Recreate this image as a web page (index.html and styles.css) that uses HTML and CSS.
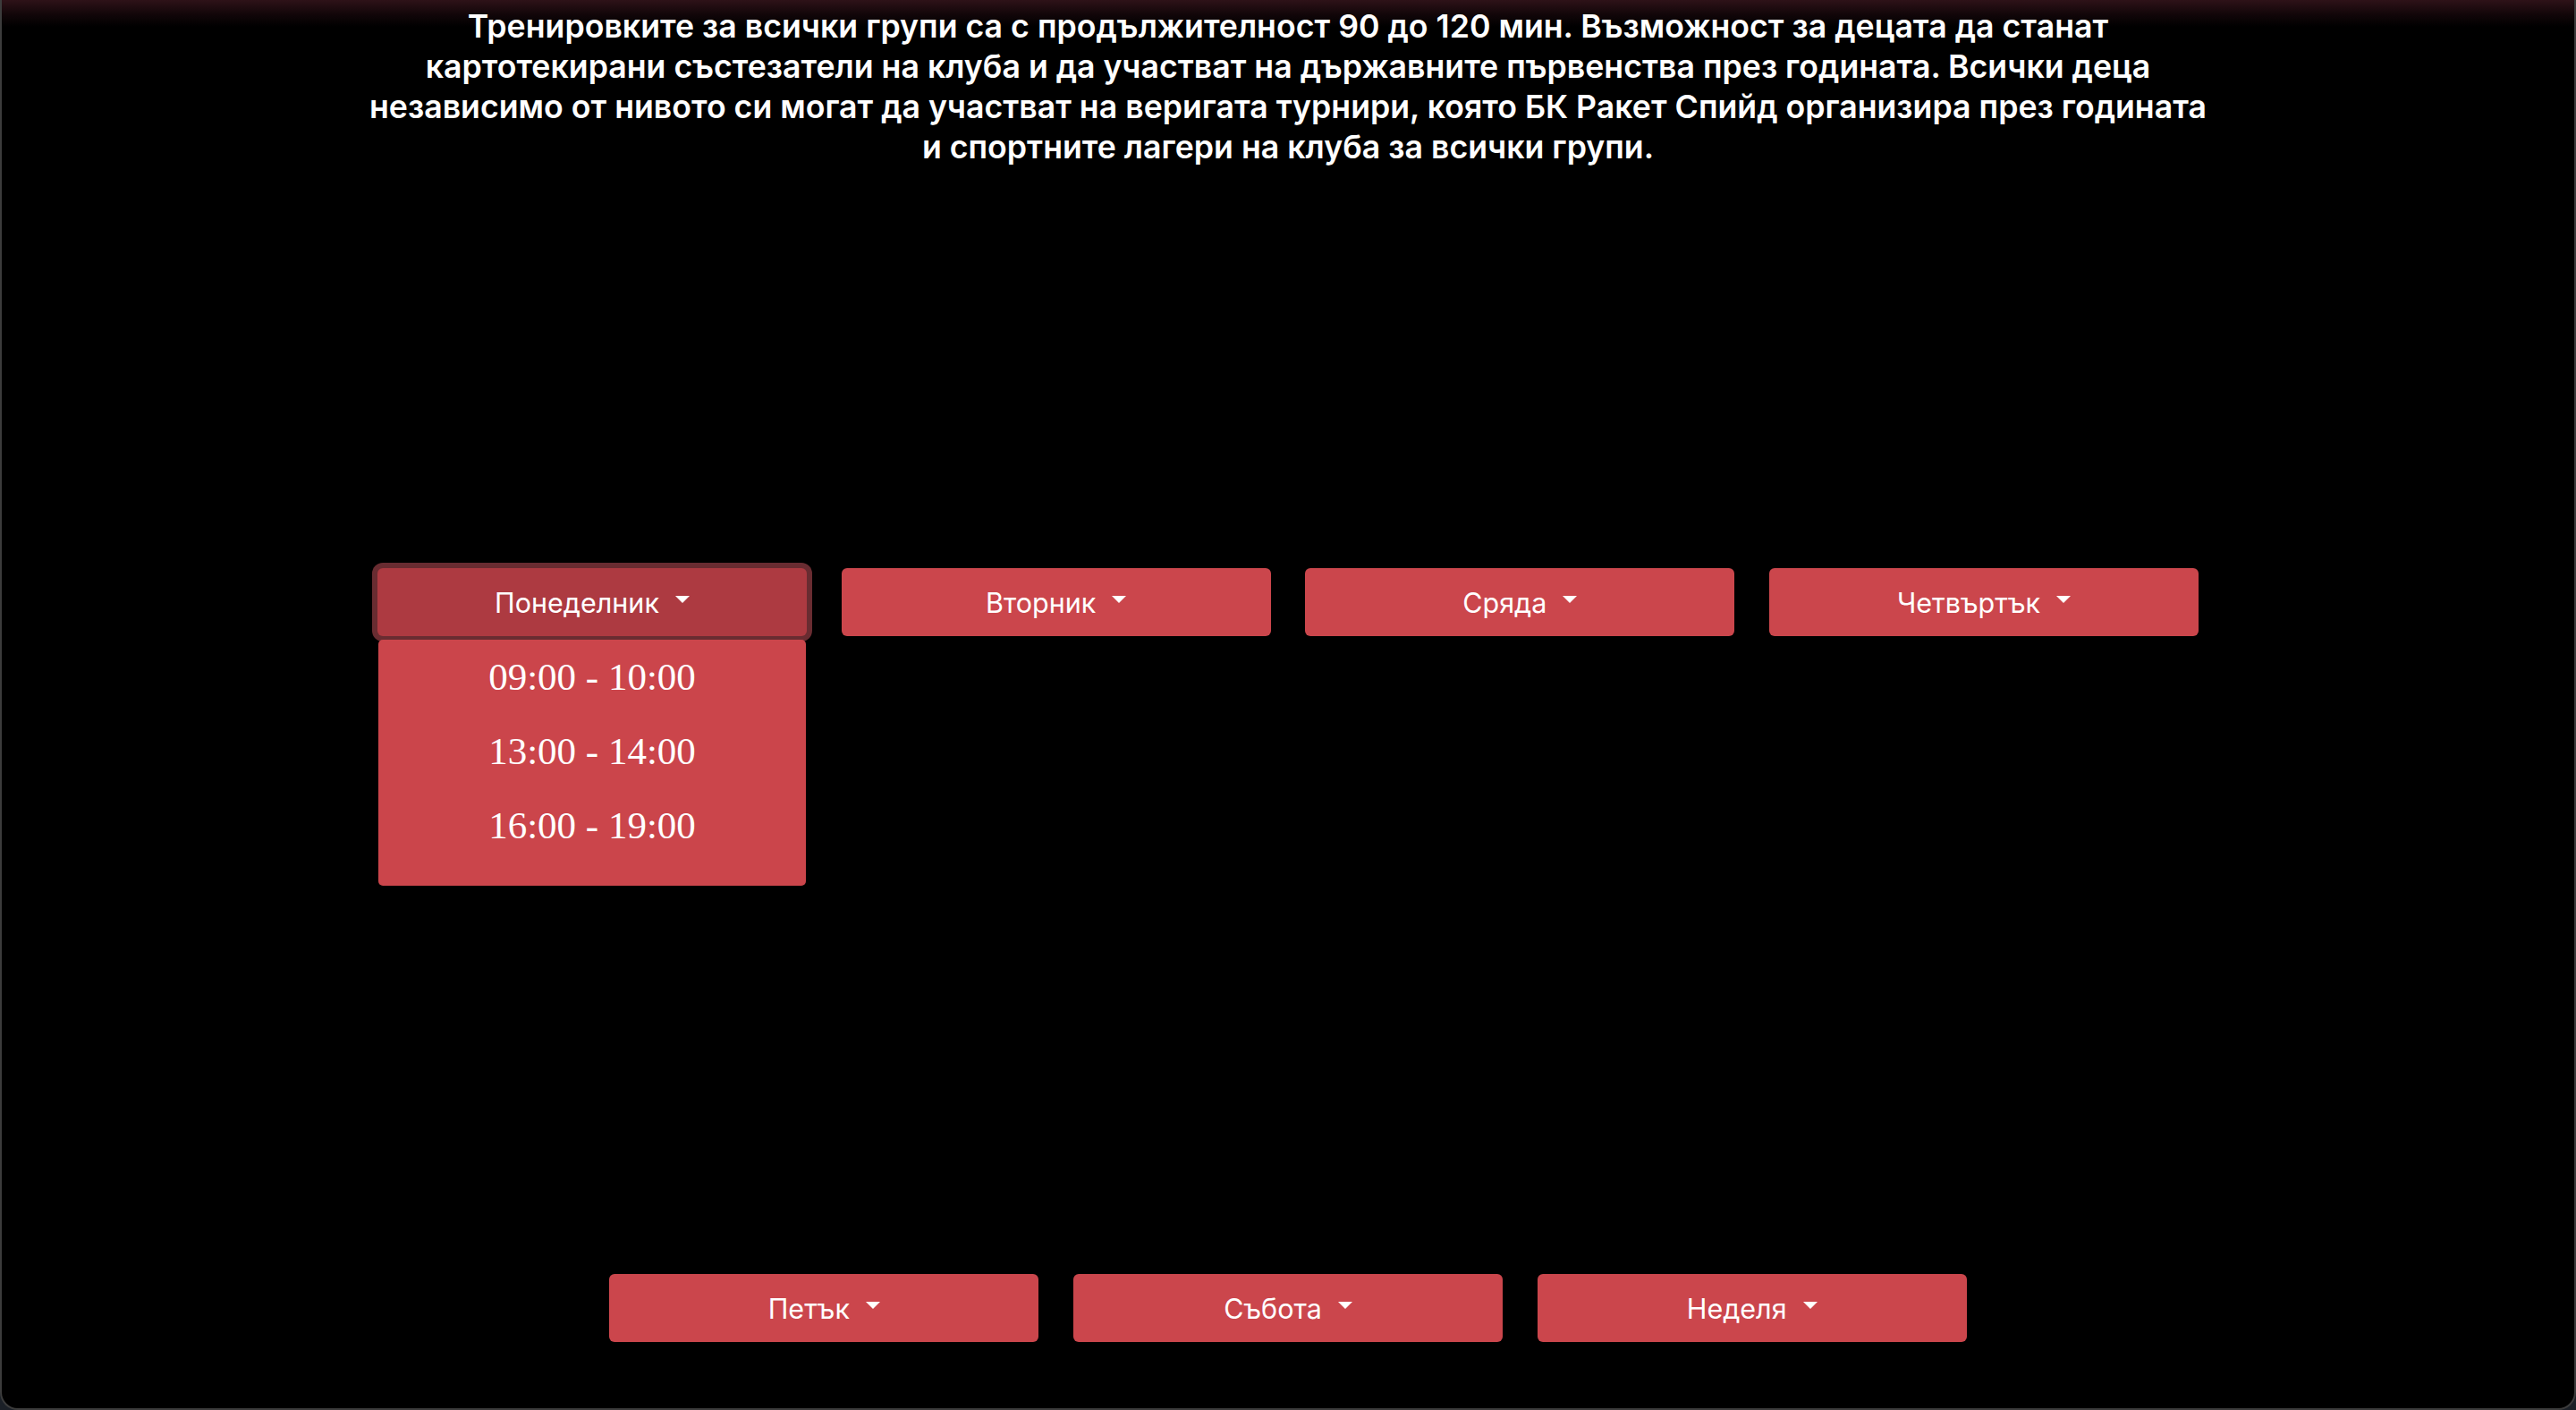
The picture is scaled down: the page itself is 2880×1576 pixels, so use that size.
FILE: index.html
```html
<!DOCTYPE html>
<html lang="bg">
<head>
<meta charset="utf-8">
<title>График</title>
<link rel="stylesheet" href="styles.css">
</head>
<body>
<div class="window">
  <p class="intro">Тренировките за всички групи са с продължителност 90 до 120 мин. Възможност за децата да станат картотекирани състезатели на клуба и да участват на държавните първенства през годината. Всички деца независимо от нивото си могат да участват на веригата турнири, която БК Ракет Спийд организира през годината и спортните лагери на клуба за всички групи.</p>

  <div class="days days-top">
    <div class="dropdown">
      <button class="day-btn is-active">Понеделник</button>
      <ul class="menu">
        <li class="menu-item">09:00 - 10:00</li>
        <li class="menu-item">13:00 - 14:00</li>
        <li class="menu-item">16:00 - 19:00</li>
      </ul>
    </div>
    <div class="dropdown"><button class="day-btn">Вторник</button></div>
    <div class="dropdown"><button class="day-btn">Сряда</button></div>
    <div class="dropdown"><button class="day-btn">Четвъртък</button></div>
  </div>

  <div class="days days-bottom">
    <div class="dropdown"><button class="day-btn">Петък</button></div>
    <div class="dropdown"><button class="day-btn">Събота</button></div>
    <div class="dropdown"><button class="day-btn">Неделя</button></div>
  </div>
</div>
</body>
</html>
```

FILE: styles.css
```css
html, body {
  margin: 0;
  padding: 0;
  background: #1b2027;
}

.window {
  box-sizing: border-box;
  width: 2880px;
  height: 1576px;
  border: 2px solid #3c3c3c;
  border-top: none;
  border-radius: 0 0 20px 20px;
  background: linear-gradient(to bottom, #2e1218 0px, #120609 16px, #000 30px, #000 100%);
  overflow: hidden;
  display: flex;
  flex-direction: column;
  align-items: center;
  font-family: Inter, "Noto Sans", sans-serif;
  color: #fff;
}

.intro {
  width: 2075px;
  margin: 7px 0 0;
  font-size: 35.7px;
  line-height: 45px;
  font-weight: 600;
  text-align: center;
}

.days {
  display: flex;
  justify-content: center;
  gap: 38.67px;
}

.days-top {
  margin-top: 448px;
}

.days-bottom {
  margin-top: 713px;
}

.dropdown {
  position: relative;
  width: 480px;
}

.day-btn {
  box-sizing: border-box;
  width: 480px;
  height: 76px;
  display: flex;
  align-items: center;
  justify-content: center;
  border: none;
  border-radius: 6px;
  background: #cb464c;
  color: #fff;
  font-family: Inter, "Noto Sans", sans-serif;
  font-size: 30.5px;
  font-weight: 400;
  padding: 0;
  cursor: pointer;
}

.day-btn::after {
  content: "";
  display: inline-block;
  margin-left: 18px;
  margin-top: -6px;
  border-top: 8px solid #fff;
  border-left: 8px solid transparent;
  border-right: 8px solid transparent;
}

.day-btn.is-active {
  background: #ad3a41;
  box-shadow: 0 0 0 6px #692c31;
}

.menu {
  position: absolute;
  top: 80px;
  left: 1px;
  width: 478px;
  margin: 0;
  padding: 0 0 26px;
  list-style: none;
  background: #cb454b;
  border-radius: 5px;
  box-sizing: border-box;
}

.menu-item {
  height: 83px;
  line-height: 83px;
  text-align: center;
  font-family: "Liberation Serif", "DejaVu Serif", serif;
  font-size: 43px;
  color: #fff;
}
```
